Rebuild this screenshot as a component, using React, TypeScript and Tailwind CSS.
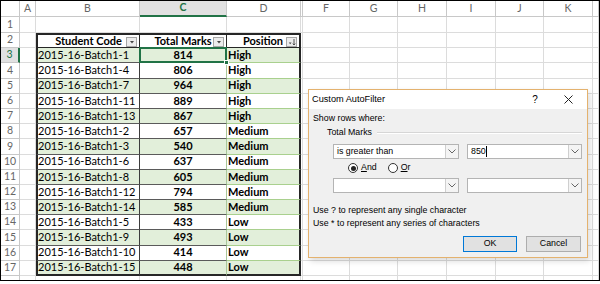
import React from "react";

const cols = [
  "w-[19px]",
  "w-[16px]",
  "w-[104px]",
  "w-[87px]",
  "w-[74px]",
  "w-[2px]",
  "w-[47px]",
  "w-[48px]",
  "w-[49px]",
  "w-[49px]",
  "w-[48px]",
  "w-[49px]",
  "flex-1",
];

const letters = ["", "A", "B", "C", "D", "", "F", "G", "H", "I", "J", "K", ""];

const students: [string, number, string][] = [
  ["2015-16-Batch1-1", 814, "High"],
  ["2015-16-Batch1-4", 806, "High"],
  ["2015-16-Batch1-7", 964, "High"],
  ["2015-16-Batch1-11", 889, "High"],
  ["2015-16-Batch1-13", 867, "High"],
  ["2015-16-Batch1-2", 657, "Medium"],
  ["2015-16-Batch1-3", 540, "Medium"],
  ["2015-16-Batch1-6", 637, "Medium"],
  ["2015-16-Batch1-8", 605, "Medium"],
  ["2015-16-Batch1-12", 794, "Medium"],
  ["2015-16-Batch1-14", 585, "Medium"],
  ["2015-16-Batch1-5", 433, "Low"],
  ["2015-16-Batch1-9", 493, "Low"],
  ["2015-16-Batch1-10", 414, "Low"],
  ["2015-16-Batch1-15", 448, "Low"],
];

function RowNum({ n, label = true }: { n: number; label?: boolean }) {
  const active = n === 3;
  return (
    <div
      className={
        active
          ? "w-[19px] shrink-0 flex items-center justify-center bg-[#e1e1e1] text-[#217346] text-[10.5px] border-b border-[#c8c8c8] border-r-2 border-r-[#217346]"
          : "w-[19px] shrink-0 flex items-center justify-center bg-white text-[#666] text-[10.5px] border-b border-r border-[#c8c8c8]"
      }
    >
      {label ? n : null}
    </div>
  );
}

function Blank({ from }: { from: number }) {
  return (
    <>
      {cols.slice(from).map((c, i) => (
        <div key={i} className={`${c} shrink-0 border-r border-b border-[#dcdcdc]`} />
      ))}
    </>
  );
}

function FilterButton({ sorted }: { sorted?: boolean }) {
  return (
    <div className="absolute right-[2px] top-[2px] w-[11px] h-[10px] border border-[#a6a6a6] bg-[#ececec] flex items-center justify-center">
      <svg width="8" height="8" viewBox="0 0 8 8">
        {sorted ? (
          <>
            <path d="M0.8 4.6 L3.6 4.6 L2.2 6.2 Z" fill="#444" />
            <path d="M6 1 L6 7 M4.8 5.6 L6 7 L7.2 5.6" stroke="#444" strokeWidth="0.9" fill="none" />
          </>
        ) : (
          <path d="M2 3 L6 3 L4 5.5 Z" fill="#444" />
        )}
      </svg>
    </div>
  );
}

function DataRow({ n, code, marks, pos }: { n: number; code: string; marks: number; pos: string }) {
  const fill = n % 2 === 1 ? "bg-[#e2efda]" : "bg-white";
  const last = n === 17;
  return (
    <div className="flex h-[15.2px] shrink-0">
      <RowNum n={n} />
      <div className="w-[16px] shrink-0 border-r border-b border-[#dcdcdc]" />
      <div
        className={`w-[104px] shrink-0 flex items-center border-l-2 border-l-[#262626] border-r border-r-[#3c3c3c] ${
          last ? "border-b-2 border-b-[#262626]" : "border-b border-b-[#5a5a5a]"
        } ${fill}`}
      >
        {code}
      </div>
      <div
        className={`relative w-[87px] shrink-0 flex items-center justify-center font-bold border-r border-r-[#a9c79a] ${
          last ? "border-b-2 border-b-[#262626]" : "border-b border-b-[#5a5a5a]"
        } ${fill}`}
      >
        {marks}
        {n === 3 && (
          <>
            <div className="absolute -inset-px border-2 border-[#217346] z-10" />
            <div className="absolute -right-[3px] -bottom-[3px] w-[5px] h-[5px] bg-[#217346] border border-white z-20" />
          </>
        )}
      </div>
      <div
        className={`w-[74px] shrink-0 flex items-center pl-[1px] font-bold border-r-2 border-r-[#262626] ${
          last ? "border-b-2 border-b-[#262626]" : "border-b border-b-[#a9d08e]"
        } ${fill}`}
      >
        {pos}
      </div>
      <Blank from={5} />
    </div>
  );
}

function Chevron() {
  return (
    <svg width="8" height="5" viewBox="0 0 8 5">
      <path d="M0.5 0.5 L4 4 L7.5 0.5" fill="none" stroke="#666" strokeWidth="1" />
    </svg>
  );
}

function Combo({ value, width, caret }: { value?: string; width: string; caret?: boolean }) {
  return (
    <div className={`${width} h-[15px] flex border border-[#b4b4b4] bg-white`}>
      <div className="flex-1 flex items-center pl-[3px]">
        {value}
        {caret && <span className="w-px h-[11px] bg-black" />}
      </div>
      <div className="w-[13px] flex items-center justify-center border-l border-[#cfcfcf] bg-[#f4f4f4]">
        <Chevron />
      </div>
    </div>
  );
}

function Radio({ checked }: { checked?: boolean }) {
  return (
    <div className="w-[10px] h-[10px] rounded-full border border-[#333] bg-white flex items-center justify-center">
      {checked && <div className="w-[5px] h-[5px] rounded-full bg-[#222]" />}
    </div>
  );
}

function Dialog() {
  return (
    <div className="absolute left-[308px] top-[89px] w-[280px] h-[169px] flex flex-col border border-[#e4b26e] bg-[#f0f0f0] shadow-[2px_3px_6px_rgba(0,0,0,0.15)] font-['Liberation_Sans',Arial,sans-serif] text-[8.8px] text-black">
      <div className="h-[19px] shrink-0 flex items-center bg-white pl-[3px]">
        <span className="flex-1 text-[9.2px]">Custom AutoFilter</span>
        <span className="w-[10px] text-[10px] text-center mr-[24px]">?</span>
        <svg width="9" height="9" viewBox="0 0 9 9" className="mr-[14px]">
          <path d="M0.5 0.5 L8.5 8.5 M8.5 0.5 L0.5 8.5" stroke="#222" strokeWidth="1" />
        </svg>
      </div>
      <div className="flex flex-col px-[4px]">
        <div className="h-[12px] mt-[4px] flex items-center">Show rows where:</div>
        <div className="h-[12px] mt-[2px] flex items-center pl-[14px] gap-[5px]">
          <span>Total Marks</span>
          <div className="flex-1 h-[2px] border-t border-[#d6d6d6] border-b border-b-white mr-[1px]" />
        </div>
        <div className="mt-[5px] flex pl-[20px] gap-[8px]">
          <Combo value="is greater than" width="w-[126px]" />
          <Combo value="850" width="w-[115px]" caret />
        </div>
        <div className="h-[10px] mt-[4px] flex items-center pl-[35px]">
          <Radio checked />
          <span className="ml-[3px]">
            <span className="underline">A</span>nd
          </span>
          <div className="ml-[11px]">
            <Radio />
          </div>
          <span className="ml-[3px]">
            <span className="underline">O</span>r
          </span>
        </div>
        <div className="mt-[5px] flex pl-[20px] gap-[8px]">
          <Combo width="w-[126px]" />
          <Combo width="w-[115px]" />
        </div>
        <div className="h-[13px] mt-[11px] flex items-center">Use ? to represent any single character</div>
        <div className="h-[13px] flex items-center">Use * to represent any series of characters</div>
        <div className="mt-[6px] flex justify-end gap-[9px] pr-[2px]">
          <div className="w-[54px] h-[16px] flex items-center justify-center border border-[#0078d7] bg-[#e1e1e1]">OK</div>
          <div className="w-[55px] h-[16px] flex items-center justify-center border border-[#adadad] bg-[#e1e1e1]">Cancel</div>
        </div>
      </div>
    </div>
  );
}

export default function App() {
  return (
    <div className="relative w-[600px] h-[284px] overflow-hidden bg-white font-['Lato',sans-serif] text-[11px] text-black">
      <div className="h-[281px] overflow-hidden flex flex-col border border-black">
        <div className="flex h-[16px] shrink-0 text-[10.5px]">
          {letters.map((l, i) =>
            i === 3 ? (
              <div
                key={i}
                className="w-[87px] shrink-0 flex items-center justify-center bg-[#e1e1e1] text-[#217346] font-bold border-r border-[#c8c8c8] border-b-2 border-b-[#217346]"
              >
                {l}
              </div>
            ) : (
              <div
                key={i}
                className={`${cols[i]} shrink-0 flex items-center justify-center bg-white text-[#666] border-r border-b border-[#c8c8c8]`}
              >
                {l}
              </div>
            )
          )}
        </div>
        <div className="flex h-[16px] shrink-0">
          <RowNum n={1} />
          <Blank from={1} />
        </div>
        <div className="flex h-[15.2px] shrink-0">
          <RowNum n={2} />
          <div className="w-[16px] shrink-0 border-r border-b border-[#dcdcdc]" />
          <div className="relative w-[104px] shrink-0 flex items-center justify-center font-bold border-l-2 border-t-2 border-r border-b border-[#262626] bg-white">
            Student Code
            <FilterButton />
          </div>
          <div className="relative w-[87px] shrink-0 flex items-center justify-center font-bold border-t-2 border-r border-b border-[#262626] bg-white">
            Total Marks
            <FilterButton />
          </div>
          <div className="relative w-[74px] shrink-0 flex items-center justify-center font-bold border-t-2 border-r-2 border-b border-[#262626] bg-white">
            Position
            <FilterButton sorted />
          </div>
          <Blank from={5} />
        </div>
        {students.map(([code, marks, pos], i) => (
          <DataRow key={code} n={i + 3} code={code} marks={marks} pos={pos} />
        ))}
        <div className="flex h-[15.2px] shrink-0">
          <RowNum n={18} label={false} />
          <Blank from={1} />
        </div>
      </div>
      <Dialog />
    </div>
  );
}
